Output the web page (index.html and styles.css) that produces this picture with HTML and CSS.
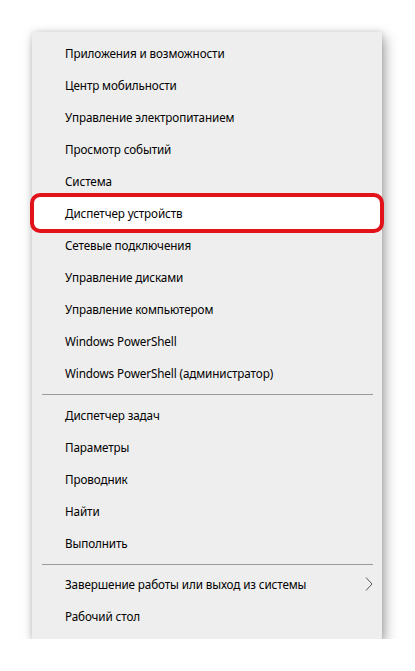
FILE: index.html
```html
<!DOCTYPE html>
<html lang="ru">
<head>
<meta charset="utf-8">
<link rel="stylesheet" href="styles.css">
</head>
<body>
<div class="menu">
  <div class="group">
    <div class="item">Приложения и возможности</div>
    <div class="item">Центр мобильности</div>
    <div class="item">Управление электропитанием</div>
    <div class="item">Просмотр событий</div>
    <div class="item">Система</div>
    <div class="item selected">Диспетчер устройств</div>
    <div class="item">Сетевые подключения</div>
    <div class="item">Управление дисками</div>
    <div class="item">Управление компьютером</div>
    <div class="item">Windows PowerShell</div>
    <div class="item">Windows PowerShell (администратор)</div>
  </div>
  <div class="sep"></div>
  <div class="group">
    <div class="item">Диспетчер задач</div>
    <div class="item">Параметры</div>
    <div class="item">Проводник</div>
    <div class="item">Найти</div>
    <div class="item">Выполнить</div>
  </div>
  <div class="sep"></div>
  <div class="group">
    <div class="item has-sub">Завершение работы или выход из системы
      <svg class="chev" width="8" height="14" viewBox="0 0 8 14"><path d="M1 0.5 L7 7 L1 13.5" fill="none" stroke="#555" stroke-width="1"/></svg>
    </div>
    <div class="item">Рабочий стол</div>
  </div>
</div>
</body>
</html>
```
FILE: styles.css
```css
html, body {
  margin: 0;
  padding: 0;
  background: #ffffff;
}
body {
  padding: 32px 0 0 32px;
  font-family: "Noto Sans", "Open Sans", sans-serif;
  font-size: 11.7px;
  letter-spacing: -0.12px;
  color: #000;
}
.menu {
  width: 350px;
  height: 607px;
  box-sizing: border-box;
  background: #eeeeee;
  box-shadow: 3px 5px 12px rgba(0,0,0,0.35), 0 0 6px rgba(0,0,0,0.12);
  padding: 5px 0 7px;
  display: flex;
  flex-direction: column;
}
.item {
  height: 32px;
  display: flex;
  align-items: center;
  padding-left: 33px;
  padding-right: 9px;
  white-space: nowrap;
}
.selected {
  position: relative;
  background: #ffffff;
}
.selected::after {
  content: "";
  position: absolute;
  top: -4px;
  bottom: -4px;
  left: -2px;
  right: -2px;
  border: 4px solid #e2121a;
  border-radius: 10px;
}
.has-sub {
  justify-content: space-between;
}
.sep {
  height: 1px;
  background: #9a9a9a;
  margin: 5px 9px 4px 10px;
}
```
